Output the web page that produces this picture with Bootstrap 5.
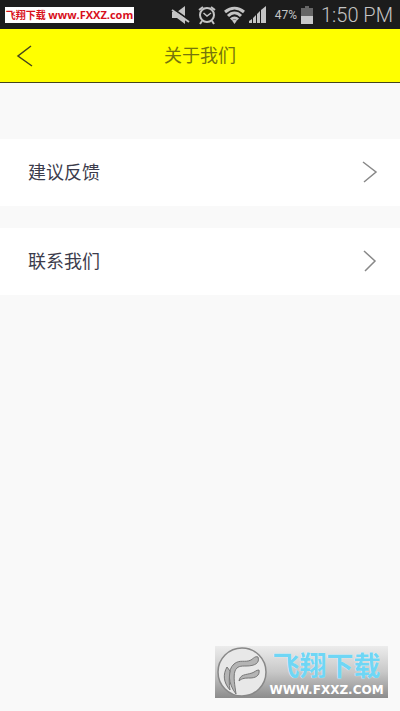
<!DOCTYPE html>
<html lang="zh-CN">
<head>
<meta charset="utf-8">
<meta name="viewport" content="width=device-width, initial-scale=1">
<title>关于我们</title>
<link href="https://cdn.jsdelivr.net/npm/bootstrap@5.3.0/dist/css/bootstrap.min.css" rel="stylesheet">
<style>
body { background: #f9f9f9; font-family: Roboto, "Noto Sans CJK SC", sans-serif; }
.status-bar { background: #1c1c1c; color: #c4c4c4; height: 29px; padding: 0 7px 0 5px; }
.site-tag { background: #fff; color: #d8101c; height: 16px; line-height: 16px; width: 129px; font-size: 10px; font-weight: 700; font-family: "Open Sans", "Noto Sans CJK SC", sans-serif; }
.site-tag .url { font-size: 11px; }
.battery-text { font-size: 12px; }
.clock { font-size: 20px; font-weight: 300; line-height: 28px; }
.title-bar { background: #ff0; height: 54px; border-bottom: 1px solid #45451c; display: grid; grid-template-columns: 50px 1fr 50px; }
.title-bar h1 { font-size: 18px; font-weight: 400; line-height: 26px; color: #75750c; }
.back { line-height: 0; padding: 0 0 0 16px; }
.menu { gap: 22px; padding-top: 56px; }
.menu-row { background: #fff; color: #3c3c4c; font-size: 18px; height: 67px; padding: 0 22px 0 28px; }
.watermark { right: 12px; bottom: 13px; width: 173px; height: 52px; padding: 0 2px; background: linear-gradient(#ececec, #c8c8c8 50%, #8c8c8c); font-family: "Noto Sans CJK SC", sans-serif; }
.wm-name { font-size: 27px; line-height: 36px; font-weight: 700; color: #6fd6f5; text-shadow: 0 0 1px #fff; }
.wm-url { font-family: "DejaVu Sans", sans-serif; font-weight: 700; font-size: 12px; line-height: 14px; color: #fff; }
</style>
</head>
<body class="min-vh-100 position-relative">
<div class="status-bar d-flex align-items-center justify-content-between">
  <div class="site-tag text-center text-nowrap">飞翔下载 <span class="url">www.FXXZ.com</span></div>
  <div class="d-flex align-items-center">
    <svg class="me-2" width="19" height="18" viewBox="0 0 19 18" aria-hidden="true"><path d="M1 6h5l8-6v18l-8-6H1z" fill="#c4c4c4"/><path d="M1 2l17 12" stroke="#1c1c1c" stroke-width="2"/><path d="M1 4l17 12" stroke="#c4c4c4" stroke-width="2"/></svg>
    <svg class="me-2" width="18" height="20" viewBox="0 0 18 20" fill="none" stroke="#c4c4c4" aria-hidden="true"><circle cx="9" cy="10" r="7" stroke-width="2"/><path d="M1 5l4-3M17 5l-4-3M4 16l-2 3M14 16l2 3" stroke-width="2"/><path d="M5.500 8L9 11l4-3" stroke-width="1.500"/></svg>
    <svg class="me-1" width="21" height="18" viewBox="0 0 21 18" fill="none" stroke="#c4c4c4" stroke-width="3" aria-hidden="true"><path d="M1 6c6-5 13-5 19 0M4 10c4-4 9-4 13 0M7 13.500c2-2 5-2 7 0"/><path d="M8 14.500q2.500-2 5 0L10.500 18z" fill="#c4c4c4" stroke="none"/></svg>
    <svg class="me-2" width="18" height="18" viewBox="0 0 18 18" fill="#c4c4c4" aria-hidden="true"><path d="M0 17v-2l3-2v4zM4 17v-5l3-3v8zM8 17V8l3-3v12zM12 17V4l5-4v17z"/></svg>
    <span class="battery-text me-1">47%</span>
    <svg class="me-2" width="12" height="18" viewBox="0 0 12 18" aria-hidden="true"><path d="M0 2h4V0h4v2h4v8H0z" fill="#666"/><path d="M0 10h12v8H0z" fill="#c8c8c8"/></svg>
    <span class="clock text-nowrap">1:50 PM</span>
  </div>
</div>
<header class="title-bar align-items-center">
  <button type="button" class="back btn border-0 rounded-0 text-start" aria-label="返回"><svg width="18" height="24" viewBox="0 0 18 24" fill="none" stroke="#45451c" stroke-width="1.500"><path d="M15 2L2 12l14 10"/></svg></button>
  <h1 class="m-0 text-center">关于我们</h1>
</header>
<main class="menu d-flex flex-column">
  <a href="#feedback" class="menu-row d-flex align-items-center justify-content-between text-decoration-none"><span>建议反馈</span><svg width="16" height="24" viewBox="0 0 16 24" fill="none" stroke="#888" stroke-width="1.500" aria-hidden="true"><path d="M1 1l13 10L2 21"/></svg></a>
  <a href="#contact" class="menu-row d-flex align-items-center justify-content-between text-decoration-none"><span>联系我们</span><svg width="16" height="24" viewBox="0 0 16 24" fill="none" stroke="#888" stroke-width="1.500" aria-hidden="true"><path d="M2 1l11 10L3 21"/></svg></a>
</main>
<div class="watermark position-absolute d-flex align-items-center">
  <svg class="flex-shrink-0" width="50" height="50" viewBox="0 0 50 50" aria-hidden="true"><circle cx="25" cy="25" r="24" fill="#e8e8e8" stroke="#888" stroke-width="1.500"/><g fill="#b4b4b4" stroke="#777"><path d="M19 47C11 37 10 23 17 17c6-5 11-1 17-4 3-2 4-4 7-3 2 6-3 9-12 9-5 0-9 0-11 5-2 6 0 15 1 23z"/><path d="M13 43C6 35 6 27 10 20l3 4c-1 7-1 13 0 19z"/><path d="M22 34c1-7 7-6 13-8 3-1 4-3 7-3 1 6-4 8-9 8-4 0-8 0-11 3z"/></g></svg>
  <div class="flex-grow-1 text-center text-nowrap"><div class="wm-name">飞翔下载</div><div class="wm-url">WWW.FXXZ.COM</div></div>
</div>
<script src="https://cdn.jsdelivr.net/npm/bootstrap@5.3.0/dist/js/bootstrap.bundle.min.js"></script>
</body>
</html>
